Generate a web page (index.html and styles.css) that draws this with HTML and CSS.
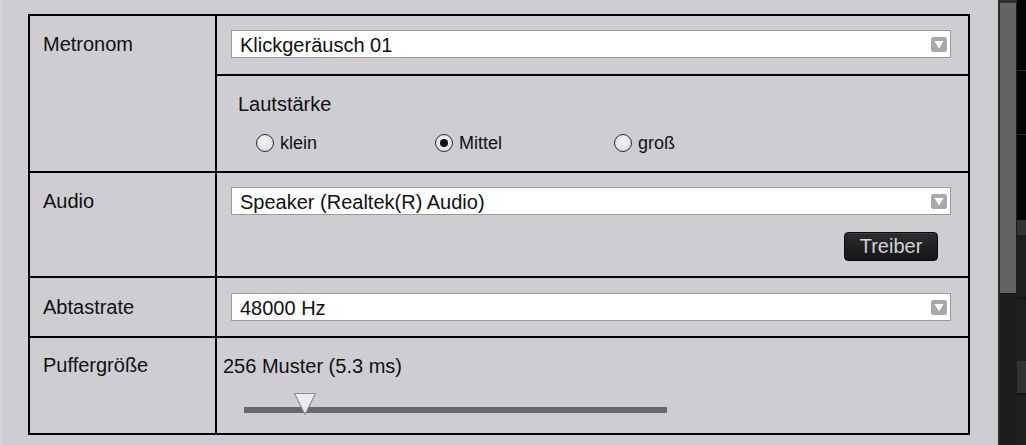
FILE: index.html
```html
<!DOCTYPE html>
<html lang="de">
<head>
<meta charset="utf-8">
<title>Einstellungen</title>
<link rel="stylesheet" href="styles.css">
</head>
<body>
<div class="page">
  <div class="main">
    <div class="panel">
      <div class="row">
        <div class="label">Metronom</div>
        <div class="content">
          <div class="sub sub-select">
            <div class="select">
              <span class="select-text">Klickgeräusch 01</span>
              <svg class="arrow" width="16" height="15" viewBox="0 0 16 15"><rect x="0" y="0" width="16" height="15" rx="2.5" fill="#a9a9ac"/><path d="M3.5 4 L12.5 4 L8 11.5 Z" fill="#ffffff"/></svg>
            </div>
          </div>
          <div class="sub sub-volume">
            <div class="caption">Lautstärke</div>
            <div class="radios">
              <div class="radio"><span class="circle"></span><span>klein</span></div>
              <div class="radio"><span class="circle checked"></span><span>Mittel</span></div>
              <div class="radio"><span class="circle"></span><span>groß</span></div>
            </div>
          </div>
        </div>
      </div>
      <div class="row">
        <div class="label">Audio</div>
        <div class="content pad-audio">
          <div class="select">
            <span class="select-text">Speaker (Realtek(R) Audio)</span>
            <svg class="arrow" width="16" height="15" viewBox="0 0 16 15"><rect x="0" y="0" width="16" height="15" rx="2.5" fill="#a9a9ac"/><path d="M3.5 4 L12.5 4 L8 11.5 Z" fill="#ffffff"/></svg>
          </div>
          <div class="btn-row"><div class="button">Treiber</div></div>
        </div>
      </div>
      <div class="row">
        <div class="label label-rate">Abtastrate</div>
        <div class="content pad-rate">
          <div class="select">
            <span class="select-text">48000 Hz</span>
            <svg class="arrow" width="16" height="15" viewBox="0 0 16 15"><rect x="0" y="0" width="16" height="15" rx="2.5" fill="#a9a9ac"/><path d="M3.5 4 L12.5 4 L8 11.5 Z" fill="#ffffff"/></svg>
          </div>
        </div>
      </div>
      <div class="row">
        <div class="label label-buffer">Puffergröße</div>
        <div class="content pad-buffer">
          <div class="value">256 Muster (5.3 ms)</div>
          <div class="slider">
            <div class="track"></div>
            <svg class="thumb" style="left: 49px" width="24" height="24" viewBox="0 0 24 24"><path d="M1.5 1.5 L22.5 1.5 L12 22.5 Z" fill="#ececee" stroke="#8e8e92" stroke-width="1.2" stroke-linejoin="round"/></svg>
          </div>
        </div>
      </div>
    </div>
  </div>
  <div class="side">
    <div class="scrollbar">
      <div class="sb-top"></div>
      <div class="sb-thumb"></div>
      <div class="sb-rest"></div>
    </div>
    <div class="edge">
      <div class="e1"></div>
      <div class="eline"></div>
      <div class="e2"></div>
      <div class="eline"></div>
      <div class="e3"></div>
      <div class="e4"></div>
      <div class="e5"></div>
      <div class="eline2"></div>
      <div class="e6"></div>
      <div class="e7"></div>
      <div class="eline2"></div>
      <div class="e8"></div>
    </div>
  </div>
</div>
</body>
</html>
```
FILE: styles.css
```css
html, body {
  margin: 0;
  padding: 0;
  height: 100%;
  overflow: hidden;
}
body {
  font-family: "Liberation Sans", Arial, sans-serif;
  color: #111;
  background: #cecdd2;
}
.page {
  display: flex;
  height: 445px;
}
.main {
  width: 998px;
  flex: none;
  background: #cecdd2;
  border-left: 2px solid #d6d5da;
  box-sizing: border-box;
  padding: 14px 0 0 26px;
}
.panel {
  width: 942px;
  box-sizing: border-box;
  border: 2px solid #000;
}
.row {
  display: grid;
  grid-template-columns: 187px 1fr;
  border-top: 2px solid #000;
}
.row:first-child {
  border-top: 0;
}
.label {
  border-right: 2px solid #000;
  font-size: 20px;
  line-height: 24px;
  padding: 16px 0 0 13px;
}
.label-rate { padding-top: 17px; }
.label-buffer { padding-top: 15px; }
.sub-select {
  padding: 14px 17px 16px 14px;
}
.sub-volume {
  border-top: 2px solid #000;
  padding: 16px 0 17px 21px;
}
.caption {
  font-size: 20px;
  line-height: 24px;
}
.radios {
  display: flex;
  margin-top: 16px;
  padding-left: 18px;
}
.radio {
  width: 179px;
  display: flex;
  align-items: center;
  gap: 6px;
  font-size: 18px;
  line-height: 22px;
}
.circle {
  width: 18px;
  height: 18px;
  box-sizing: border-box;
  border: 1.5px solid #2c2c2e;
  border-radius: 50%;
  background: radial-gradient(circle at 50% 40%, #f4f4f6 0%, #d9d9dd 100%);
  display: flex;
  align-items: center;
  justify-content: center;
}
.circle.checked::after {
  content: "";
  width: 8px;
  height: 8px;
  border-radius: 50%;
  background: #111;
}
.select {
  display: flex;
  align-items: center;
  justify-content: space-between;
  height: 28px;
  box-sizing: border-box;
  border: 1px solid #9a9a9c;
  background: #fff;
  padding: 0 3px 0 8px;
}
.select-text {
  font-size: 20px;
  line-height: 24px;
  padding-top: 1px;
}
.arrow {
  display: block;
  flex: none;
}
.pad-audio {
  padding: 14px 17px 15px 14px;
}
.btn-row {
  display: flex;
  justify-content: flex-end;
  margin-top: 17px;
  padding-right: 13px;
}
.button {
  width: 94px;
  height: 29px;
  box-sizing: border-box;
  border: 1px solid #0a0a0a;
  border-radius: 4px;
  background: linear-gradient(#2c2c2e, #161617);
  box-shadow: inset 0 1px 0 #3c3c3e;
  color: #d2d2d4;
  font-size: 20px;
  line-height: 27px;
  text-align: center;
}
.pad-rate {
  padding: 15px 17px 15px 14px;
}
.pad-buffer {
  padding: 16px 0 17px 6px;
}
.value {
  font-size: 20px;
  line-height: 24px;
}
.slider {
  position: relative;
  margin: 15px 0 0 21px;
  width: 423px;
  height: 23px;
}
.track {
  position: absolute;
  left: 0;
  right: 0;
  top: 14px;
  height: 6px;
  background: #68686c;
}
.thumb {
  position: absolute;
  top: -1px;
}
.side {
  flex: 1;
  display: flex;
}
.scrollbar {
  width: 19px;
  display: flex;
  flex-direction: column;
  background: #1d1d1e;
  border-left: 2px solid #2a2a2b;
  box-sizing: border-box;
}
.sb-top {
  height: 3px;
  background: #2f2f30;
}
.sb-thumb {
  height: 290px;
  width: 16px;
  background: #636364;
}
.sb-rest {
  flex: 1;
}
.edge {
  flex: 1;
  display: flex;
  flex-direction: column;
  background: #1e1e1f;
}
.e1 { height: 70px; background: #050505; }
.e2 { height: 63px; background: #050505; }
.e3 { height: 85px; background: #050505; }
.e4 { height: 15px; background: #333335; }
.e5 { height: 62px; background: #1e1e1f; }
.e6 { height: 62px; background: #1e1e1f; }
.e7 { height: 32px; background: #323234; }
.e8 { flex: 1; background: #1e1e1f; }
.eline { height: 1px; background: #2e2e30; }
.eline2 { height: 2px; background: #121213; }
```
